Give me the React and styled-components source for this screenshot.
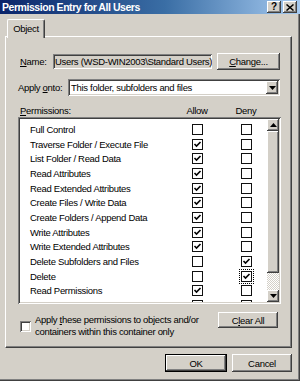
import React from 'react';
import styled, { createGlobalStyle } from 'styled-components';

const Global = createGlobalStyle`
  html, body { margin: 0; padding: 0; background: #d4d0c8; }
  body {
    width: 300px; height: 381px; overflow: hidden;
    font-family: "Liberation Sans", Arial, sans-serif;
    font-size: 9.5px; letter-spacing: -0.3px; color: #000;
  }
`;

const raised = `
  box-shadow: inset -1px -1px 0 #404040, inset 1px 1px 0 #ffffff, inset -2px -2px 0 #808080, inset 2px 2px 0 #d4d0c8;
`;
const sunken = `
  box-shadow: inset 1px 1px 0 #808080, inset -1px -1px 0 #ffffff, inset 2px 2px 0 #404040, inset -2px -2px 0 #d4d0c8;
`;

const Window = styled.div`
  width: 300px; height: 381px; box-sizing: border-box;
  background: #d4d0c8;
  display: flex; flex-direction: column;
  box-shadow: inset -1px -1px 0 #404040, inset -2px -2px 0 #808080;
`;

const TitleBar = styled.div`
  height: 14px; flex: none;
  display: flex; align-items: center;
  background: linear-gradient(to right, #0a246a 0%, #3a6ea5 55%, #a6caf0 100%);
  padding: 0 3px 0 2px;
`;

const TitleText = styled.div`
  flex: 1; color: #fff; font-family: "Liberation Sans", Arial, sans-serif;
  font-weight: bold; font-size: 10.5px; letter-spacing: -0.45px; white-space: nowrap;
`;

const TitleButton = styled.div`
  width: 14px; height: 12px; box-sizing: border-box; background: #d4d0c8;
  ${raised}
  display: flex; align-items: center; justify-content: center;
  font-weight: bold; font-size: 10px; line-height: 1; letter-spacing: 0;
  margin-left: ${p => (p.$gap ? '2px' : '0')};
`;

const TabStrip = styled.div`
  margin: 5px 0 0 7px; height: 18px; display: flex; position: relative; z-index: 1;
  margin-bottom: -1px;
`;

const Tab = styled.div`
  width: 38px; height: 19px; box-sizing: border-box;
  background: #d4d0c8;
  border-top: 1px solid #fff; border-left: 1px solid #fff;
  border-right: 1px solid #404040;
  border-radius: 2px 2px 0 0;
  box-shadow: inset -1px 0 0 #808080;
  display: flex; align-items: center; justify-content: center;
  padding-bottom: 1px;
`;

const Panel = styled.div`
  margin: 0 8px 0 5px; height: 312px; box-sizing: border-box;
  border-top: 1px solid #fff; border-left: 1px solid #fff;
  border-right: 1px solid #404040; border-bottom: 1px solid #404040;
  box-shadow: inset -1px -1px 0 #808080;
  padding: 15px 10px 9px 12px;
  display: flex; flex-direction: column;
`;

const FormRow = styled.div`
  display: flex; align-items: center; height: ${p => p.$h || 18}px;
  margin-top: ${p => p.$mt || 0}px;
`;

const Label = styled.div`
  width: ${p => p.$w}px; padding-left: ${p => p.$pl || 0}px; box-sizing: border-box;
  white-space: nowrap; flex: none;
`;

const U = styled.span` text-decoration: underline; `;

const Field = styled.div`
  width: ${p => p.$w}px; height: ${p => p.$h}px; box-sizing: border-box;
  background: ${p => (p.$white ? '#fff' : '#d4d0c8')};
  ${sunken}
  display: flex; align-items: center; padding-left: ${p => p.$pl || 3}px;
  white-space: nowrap; overflow: hidden; flex: none;
`;

const Button = styled.div`
  width: ${p => p.$w}px; height: ${p => p.$h || 17}px; box-sizing: border-box;
  background: #d4d0c8;
  ${p => (p.$default
    ? `box-shadow: inset 0 0 0 1px #000, inset -2px -2px 0 #404040, inset 2px 2px 0 #ffffff, inset -3px -3px 0 #808080;`
    : raised)}
  display: flex; align-items: center; justify-content: center;
  margin-left: ${p => p.$ml || 0}px; margin-right: ${p => p.$mr || 0}px;
  flex: none; white-space: nowrap;
`;

const DropButton = styled.div`
  margin-left: auto; margin-right: 2px; width: 12px; height: 13px; box-sizing: border-box;
  background: #d4d0c8; ${raised}
  display: flex; align-items: center; justify-content: center; flex: none;
`;

const HeaderRow = styled.div`
  display: flex; align-items: center; height: 13px; margin-top: 8px; padding-left: 2px;
`;

const HeaderCol = styled.div`
  width: 40px; text-align: center; margin-left: ${p => p.$ml || 0}px;
`;

const ListBox = styled.div`
  height: 187px; width: 263px; box-sizing: border-box; padding: 2px;
  background: #fff; ${sunken}
  display: flex;
`;

const Rows = styled.div`
  flex: 1; overflow: hidden; padding-top: 3px;
`;

const Row = styled.div`
  display: grid; grid-template-columns: 162px 11px 38px 11px;
  align-items: center; height: 14.7px; padding-left: 10px; white-space: nowrap;
`;

const Box = styled.div`
  width: 11px; height: 11px; box-sizing: border-box; border: 1px solid #111; background: #fff;
  display: flex; align-items: center; justify-content: center;
  ${p => p.$focus && `
    outline: 1px dotted #000; outline-offset: 1px;
  `}
`;

const ScrollBar = styled.div`
  width: 12px; display: flex; flex-direction: column;
  background: repeating-conic-gradient(#ffffff 0 25%, #d4d0c8 0 50%) 0 0 / 2px 2px;
`;

const ScrollBtn = styled.div`
  height: 12px; flex: none; background: #d4d0c8; ${raised}
  display: flex; align-items: center; justify-content: center;
`;

const Thumb = styled.div`
  height: 142px; flex: none; background: #d4d0c8; ${raised}
`;

const Spacer = styled.div` flex: 1; `;

const BottomRow = styled.div`
  display: flex; align-items: flex-start; margin-top: 8px;
`;

const CheckLabel = styled.div`
  display: flex; align-items: flex-start; padding-left: 2px; flex: 1;
`;

const Check3D = styled.div`
  width: 11px; height: 11px; box-sizing: border-box; background: #fff; margin-top: 9px; flex: none;
  ${sunken}
`;

const CheckText = styled.div`
  margin-left: 4px; margin-top: 2px; line-height: 12px; white-space: nowrap;
`;

const Footer = styled.div`
  display: flex; justify-content: flex-end; padding: 6px 8px 0 0;
`;

const Tick = () => (
  <svg width="9" height="9" viewBox="0 0 9 9">
    <path d="M1.5 4 L3.5 6 L7.5 2" fill="none" stroke="#000" strokeWidth="1.6" />
  </svg>
);

const TriDown = () => (
  <svg width="7" height="4" viewBox="0 0 7 4"><path d="M0 0 H7 L3.5 4 Z" fill="#000" /></svg>
);
const TriUp = () => (
  <svg width="7" height="4" viewBox="0 0 7 4"><path d="M0 4 H7 L3.5 0 Z" fill="#000" /></svg>
);

const rows = [
  ['Full Control', false, false],
  ['Traverse Folder / Execute File', true, false],
  ['List Folder / Read Data', true, false],
  ['Read Attributes', true, false],
  ['Read Extended Attributes', true, false],
  ['Create Files / Write Data', true, false],
  ['Create Folders / Append Data', true, false],
  ['Write Attributes', true, false],
  ['Write Extended Attributes', true, false],
  ['Delete Subfolders and Files', false, true],
  ['Delete', false, true, true],
  ['Read Permissions', true, false],
  ['Change Permissions', false, false],
];

export default function App() {
  return (
    <>
      <Global />
      <Window>
        <TitleBar>
          <TitleText>Permission Entry for All Users</TitleText>
          <TitleButton>?</TitleButton>
          <TitleButton $gap>
            <svg width="8" height="7" viewBox="0 0 8 7">
              <path d="M0.5 0.5 L7.5 6.5 M7.5 0.5 L0.5 6.5" stroke="#000" strokeWidth="1.5" />
            </svg>
          </TitleButton>
        </TitleBar>
        <TabStrip>
          <Tab>Object</Tab>
        </TabStrip>
        <Panel>
          <FormRow>
            <Label $w={35} $pl={2}><U>N</U>ame:</Label>
            <Field $w={159} $h={15} $pl={2}>Users (WSD-WIN2003\Standard Users)</Field>
            <Button $w={63} $ml={5}><U>C</U>hange...</Button>
          </FormRow>
          <FormRow $mt={9} $h={17}>
            <Label $w={50}>Apply <U>o</U>nto:</Label>
            <Field $w={212} $h={17} $white>
              This folder, subfolders and files
              <DropButton><TriDown /></DropButton>
            </Field>
          </FormRow>
          <HeaderRow>
            <Label $w={157}><U>P</U>ermissions:</Label>
            <HeaderCol>Allow</HeaderCol>
            <HeaderCol $ml={9}>Deny</HeaderCol>
          </HeaderRow>
          <ListBox>
            <Rows>
              {rows.map(([name, allow, deny, focus]) => (
                <Row key={name}>
                  <span>{name}</span>
                  <Box>{allow && <Tick />}</Box>
                  <span />
                  <Box $focus={focus}>{deny && <Tick />}</Box>
                </Row>
              ))}
            </Rows>
            <ScrollBar>
              <ScrollBtn><TriUp /></ScrollBtn>
              <Thumb />
              <Spacer />
              <ScrollBtn><TriDown /></ScrollBtn>
            </ScrollBar>
          </ListBox>
          <BottomRow>
            <CheckLabel>
              <Check3D />
              <CheckText>
                Apply <U>t</U>hese permissions to objects and/or<br />
                containers within this container only
              </CheckText>
            </CheckLabel>
            <Button $w={60} $h={16} $mr={3}>C<U>l</U>ear All</Button>
          </BottomRow>
        </Panel>
        <Footer>
          <Button $w={62} $h={18} $default>OK</Button>
          <Button $w={60} $h={18} $ml={5}>Cancel</Button>
        </Footer>
      </Window>
    </>
  );
}
